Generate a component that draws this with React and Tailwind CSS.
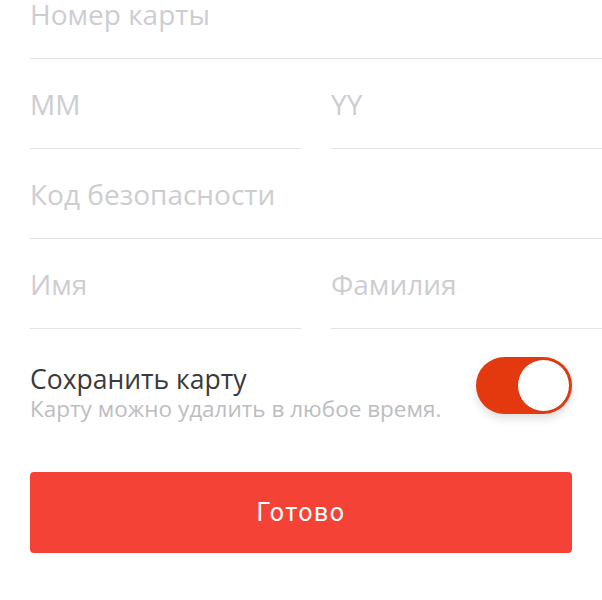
import React, { useState } from 'react';

const Field = ({ placeholder }) => (
  <div className="h-[90px] border-b border-[#e3e3e3] flex items-center">
    <input
      type="text"
      placeholder={placeholder}
      className="w-full bg-transparent outline-none text-[28px] text-[#333] placeholder:text-[#cdcdd1] font-['Open_Sans',sans-serif]"
    />
  </div>
);

const App = () => {
  const [saveCard, setSaveCard] = useState(true);

  return (
    <div className="min-h-[600px] bg-white overflow-hidden font-['Open_Sans',sans-serif]">
      <div className="-mt-[31px] pl-[30px]">
        <Field placeholder="Номер карты" />
        <div className="grid grid-cols-2 gap-x-[30px]">
          <Field placeholder="MM" />
          <Field placeholder="YY" />
        </div>
        <Field placeholder="Код безопасности" />
        <div className="grid grid-cols-2 gap-x-[30px]">
          <Field placeholder="Имя" />
          <Field placeholder="Фамилия" />
        </div>
      </div>

      <div className="px-[30px]">
        <div className="mt-[28px] h-[57px] flex items-start justify-between">
          <div className="mt-[8px] flex flex-col gap-[4px]">
            <p className="text-[26.5px] leading-[28px] text-[#3a3a3a]">Сохранить карту</p>
            <p className="text-[22.5px] leading-[24px] text-[#bdbdc1]">Карту можно удалить в любое время.</p>
          </div>
          <button
            type="button"
            onClick={() => setSaveCard(!saveCard)}
            className={`w-[96px] h-[57px] rounded-full flex items-center px-[2px] shadow-[0_5px_8px_rgba(0,0,0,0.12)] ${
              saveCard ? 'bg-[#e4380f] justify-end' : 'bg-[#e5e5e5] justify-start'
            }`}
          >
            <span className="w-[53px] h-[53px] rounded-full bg-white border border-[#c63516]" />
          </button>
        </div>

        <button
          type="button"
          className="mt-[58px] w-full h-[81px] rounded-[4px] bg-[#f44336] text-white text-[25px] tracking-[1.5px] font-normal font-['Roboto',sans-serif]"
        >
          Готово
        </button>
      </div>
    </div>
  );
};

export default App;
